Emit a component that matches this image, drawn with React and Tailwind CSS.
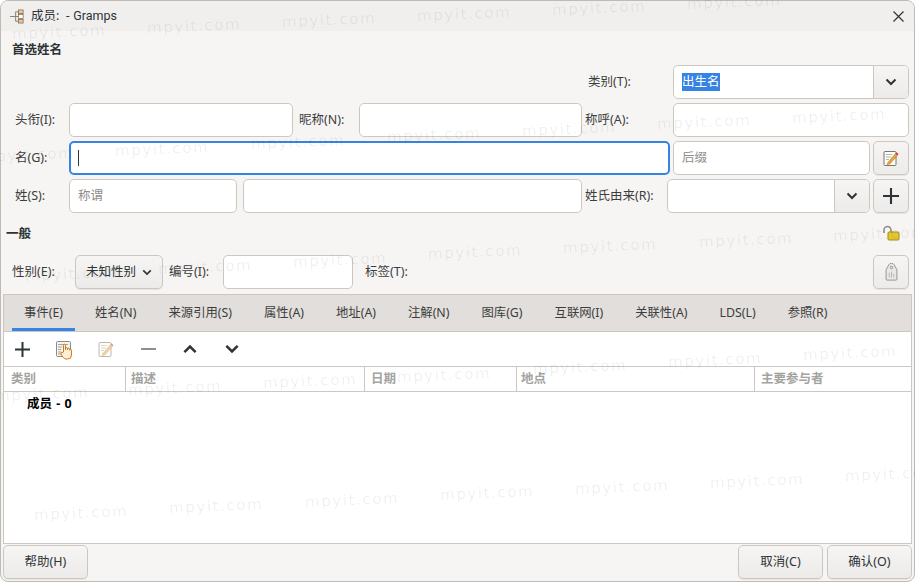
import React from 'react';

const FONT = 'font-["Noto_Sans","Noto_Sans_CJK_SC",sans-serif]';

const marks = [
  [12, 32], [147, 26], [282, 20], [417, 14], [552, 8], [687, 2],
  [-20, 155], [115, 149], [251, 142], [387, 135], [522, 129], [657, 122], [792, 116],
  [25, 274], [158, 267], [293, 260], [428, 252], [563, 246], [699, 240], [833, 234],
  [-5, 394], [128, 388], [263, 381], [397, 375], [533, 367], [668, 360], [803, 353],
  [34, 513], [169, 506], [305, 500], [440, 493], [575, 487], [710, 481], [845, 474],
];

const tabs = ['事件(E)', '姓名(N)', '来源引用(S)', '属性(A)', '地址(A)', '注解(N)', '图库(G)', '互联网(I)', '关联性(A)', 'LDS(L)', '参照(R)'];

function Chevron({ className = 'w-3 h-2' }) {
  return (
    <svg viewBox="0 0 12 8" className={className} fill="none" stroke="#2e3436" strokeWidth="2">
      <path d="M1.5 1.5 6 6l4.5-4.5" />
    </svg>
  );
}

function Plus({ className = 'w-[15px] h-[15px]' }) {
  return (
    <svg viewBox="0 0 15 15" className={className} fill="none" stroke="#2e3436" strokeWidth="2">
      <path d="M7.5 0v15M0 7.5h15" />
    </svg>
  );
}

function NoteIcon({ className = 'w-[16px] h-[16px]' }) {
  return (
    <svg viewBox="0 0 16 16" className={className}>
      <rect x="1" y="1.5" width="12" height="14" rx="1" fill="#fdfcf6" stroke="#77776f" />
      <path d="M3 4.5h6M3 7h5M3 9.5h3" stroke="#b5b5b0" />
      <path d="M4.5 13 12.5 3.5l2 1.8L6.8 14l-2.6.6z" fill="#e9a33c" stroke="#b06f18" strokeWidth=".5" />
      <path d="m12.5 3.5 1-1.2 2 1.8-1 1.2z" fill="#d3382c" />
    </svg>
  );
}

function HandNoteIcon() {
  return (
    <svg viewBox="0 0 17 19" className="w-[17px] h-[19px]">
      <rect x="0.5" y="0.5" width="14" height="15" rx="1" fill="#f4f3ef" stroke="#8a8a86" />
      <path d="M2 3.5h10M2 6h4M2 8.5h3M2 11h3M2 13h3" stroke="#a5a5a0" />
      <path d="M7.5 11V4.2a1 1 0 0 1 2 0V9V7.6a1 1 0 0 1 2 0V9v-.8a1 1 0 0 1 2 0V9.300a1 1 0 0 1 2 0V14a4 4 0 0 1-4 4h-1.500a3.500 3.500 0 0 1-3-1.800L5 13c-.6-1.200.9-2.400 1.900-1.300z" fill="#fdf0d8" stroke="#cf7a1e" strokeWidth="1" />
    </svg>
  );
}

function Entry({ className = '', children }) {
  return (
    <div className={`h-[34px] shrink-0 rounded-[5px] border border-[#cdc7c2] bg-white flex items-center px-[8px] text-[#8f8d8a] ${className}`}>
      {children}
    </div>
  );
}

function Btn({ className = '', children }) {
  return (
    <div className={`h-[34px] shrink-0 rounded-[5px] border border-[#cdc7c2] bg-gradient-to-b from-[#f6f5f4] to-[#edebe9] shadow-[0_1px_1px_rgba(0,0,0,0.07)] flex items-center justify-center text-[#2e3436] ${className}`}>
      {children}
    </div>
  );
}

function ComboBtn() {
  return (
    <div className="w-[35px] h-full shrink-0 border-l border-[#cdc7c2] bg-gradient-to-b from-[#f6f5f4] to-[#edebe9] flex items-center justify-center">
      <Chevron />
    </div>
  );
}

export default function App() {
  return (
    <div className={`relative w-[915px] h-[582px] overflow-hidden bg-white text-[12.5px] leading-none text-[#3d3d3d] ${FONT}`}>
      <div className="w-full h-full flex flex-col rounded-[8px] border border-[#bdbab7] bg-[#f6f5f4] overflow-hidden">
        {/* titlebar */}
        <div className="h-[30px] shrink-0 flex items-center bg-[#f0efee] pl-[9px] pr-[10px] text-[#2e3436]">
          <svg viewBox="0 0 16 16" className="w-[15px] h-[15px] mr-[6px]">
            <path d="M0 8h6M6 3v10M6 3h4M6 13h4M6 8h4" stroke="#8a7a68" fill="none" />
            <rect x="9" y="1" width="5" height="4" fill="#e8c8a0" stroke="#7a5a38" strokeWidth=".7" />
            <rect x="9" y="6" width="5" height="4" fill="#fff" stroke="#7a5a38" strokeWidth=".7" />
            <rect x="9" y="11" width="5" height="4" fill="#e8c8a0" stroke="#7a5a38" strokeWidth=".7" />
          </svg>
          <span>成员:&nbsp; - <span className='font-["Roboto",sans-serif]'>Gramps</span></span>
          <svg viewBox="0 0 11 11" className="w-[11px] h-[11px] ml-auto" fill="none" stroke="#2e3436" strokeWidth="1.2">
            <path d="M.5.5l10 10M10.500.5l-10 10" />
          </svg>
        </div>

        {/* 首选姓名 */}
        <div className="h-[34px] shrink-0 pl-[11px] pt-[13px] font-bold text-[#2e3436]">首选姓名</div>

        <div className="flex flex-col gap-[4px]">
          <div className="flex items-center justify-end pr-[5px]">
            <span className="w-[85px] shrink-0 pt-[1px]">类别(T):</span>
            <Entry className="w-[236px] !pr-0 overflow-hidden">
              <span className="bg-[#3584e4] text-white py-[3px]">出生名</span>
              <div className="ml-auto h-full"><ComboBtn /></div>
            </Entry>
          </div>

          <div className="flex items-center pl-[14px]">
            <span className="w-[54px] shrink-0">头衔(I):</span>
            <Entry className="w-[224px]" />
            <span className="w-[60px] shrink-0 ml-[6px]">昵称(N):</span>
            <Entry className="w-[223px]" />
            <span className="w-[88px] shrink-0 ml-[3px]">称呼(A):</span>
            <Entry className="w-[236px]" />
          </div>

          <div className="flex items-center pl-[14px]">
            <span className="w-[54px] shrink-0">名(G):</span>
            <Entry className="w-[601px] border-2 !border-[#3584e4] !px-[7px]">
              <span className="w-px h-[16px] bg-[#2e3436]" />
            </Entry>
            <Entry className="w-[197px] ml-[3px]">后缀</Entry>
            <Btn className="w-[36px] ml-[3px]"><NoteIcon /></Btn>
          </div>

          <div className="flex items-center pl-[14px]">
            <span className="w-[54px] shrink-0">姓(S):</span>
            <Entry className="w-[168px]">称谓</Entry>
            <Entry className="w-[339px] ml-[6px]" />
            <span className="w-[82px] shrink-0 ml-[3px]">姓氏由来(R):</span>
            <Entry className="w-[203px] !pr-0 overflow-hidden justify-end"><ComboBtn /></Entry>
            <Btn className="w-[36px] ml-[3px]"><Plus className="w-[16px] h-[16px]" /></Btn>
          </div>
        </div>

        {/* 一般 */}
        <div className="h-[42px] shrink-0 flex items-start justify-between pl-[5px] pr-[14px] pt-[15px] font-bold text-[#2e3436]">
          <span>一般</span>
          <svg viewBox="0 0 18 16" className="w-[18px] h-[16px] -mt-[3px] -ml-[2px]">
            <path d="M2 8V5a3.500 3.500 0 0 1 7 0v2" fill="none" stroke="#8d8d8a" strokeWidth="1.600" />
            <rect x="6" y="7" width="11" height="8" rx="1" fill="#e4c632" stroke="#a38c12" />
          </svg>
        </div>

        <div className="flex items-center pl-[11px] pr-[5px]">
          <span className="w-[63px] shrink-0">性别(E):</span>
          <Btn className="w-[88px] gap-[6px]">未知性别<Chevron className="w-[10px] h-[7px]" /></Btn>
          <span className="w-[54px] shrink-0 ml-[6px]">编号(I):</span>
          <Entry className="w-[130px]" />
          <span className="ml-[12px]">标签(T):</span>
          <Btn className="w-[36px] ml-auto">
            <svg viewBox="0 0 14 20" className="w-[13px] h-[18px]">
              <path d="M1 7.500 4 2a3.500 3.500 0 0 1 6 0l3 5.500V18a1 1 0 0 1-1 1H2a1 1 0 0 1-1-1z" fill="#e9e8e5" stroke="#8d8d8a" />
              <circle cx="7" cy="5" r="1.400" fill="none" stroke="#8d8d8a" />
              <path d="M4.500 11v5M7 9.500V16M9.500 12v4" stroke="#b0b0ac" />
            </svg>
          </Btn>
        </div>

        {/* notebook */}
        <div className="mt-[5px] ml-[2px] mr-[2px] h-[250px] shrink-0 flex flex-col border border-[#cdc7c2] bg-white">
          <div className="h-[37px] shrink-0 flex gap-[8px] pl-[8px] bg-[#e1dedb] border-b border-[#cdc7c2] text-[12.35px]">
            {tabs.map((t, i) => (
              <div key={t} className={`h-[36px] px-[12px] flex items-center justify-center text-[#3d3d3d] ${i === 0 ? 'border-b-[3px] border-[#3584e4] pt-[3px]' : ''}`}>{t}</div>
            ))}
          </div>

          <div className="h-[34px] shrink-0 flex items-center pl-[11px]">
            <Plus className="w-[15px] h-[15px]" />
            <div className="ml-[26px] mt-[2px]"><HandNoteIcon /></div>
            <div className="ml-[25px] opacity-50"><NoteIcon /></div>
            <svg viewBox="0 0 15 2" className="w-[15px] h-[2px] ml-[27px]"><path d="M0 1h15" stroke="#8f8f8c" strokeWidth="2" /></svg>
            <Chevron className="w-[16px] h-[10px] ml-[26px] rotate-180" />
            <Chevron className="w-[16px] h-[10px] ml-[26px]" />
          </div>

          <div className="h-[26px] shrink-0 flex border-y border-[#cdc7c2] text-[#a3a3a0] font-bold">
            <div className="w-[121px] pl-[7px] flex items-center">类别</div>
            <div className="w-[239px] pl-[5px] flex items-center border-l border-[#cdc7c2]">描述</div>
            <div className="w-[152px] pl-[6px] flex items-center border-l border-[#cdc7c2]">日期</div>
            <div className="w-[238px] pl-[4px] flex items-center border-l border-[#cdc7c2]">地点</div>
            <div className="flex-1 pl-[6px] flex items-center border-l border-[#cdc7c2]">主要参与者</div>
          </div>

          <div className="pl-[23px] pt-[6px] font-bold text-black [word-spacing:1px]">成员 - 0</div>
        </div>

        {/* action area */}
        <div className="mt-[1px] flex gap-[4px] px-[2px]">
          <Btn className="w-[85px] mr-auto">帮助(H)</Btn>
          <Btn className="w-[85px]">取消(C)</Btn>
          <Btn className="w-[85px]">确认(O)</Btn>
        </div>
      </div>

      {/* watermark */}
      <div className="absolute inset-0 pointer-events-none">
        {marks.map(([x, y]) => (
          <span
            key={`${x}-${y}`}
            className='absolute -rotate-[2.5deg] whitespace-nowrap text-[15px] leading-none tracking-[1.6px] text-black/[0.07] font-["DejaVu_Sans",sans-serif]'
            style={{ left: x, top: y - 7 }}
          >
            mpyit.com
          </span>
        ))}
      </div>
    </div>
  );
}
